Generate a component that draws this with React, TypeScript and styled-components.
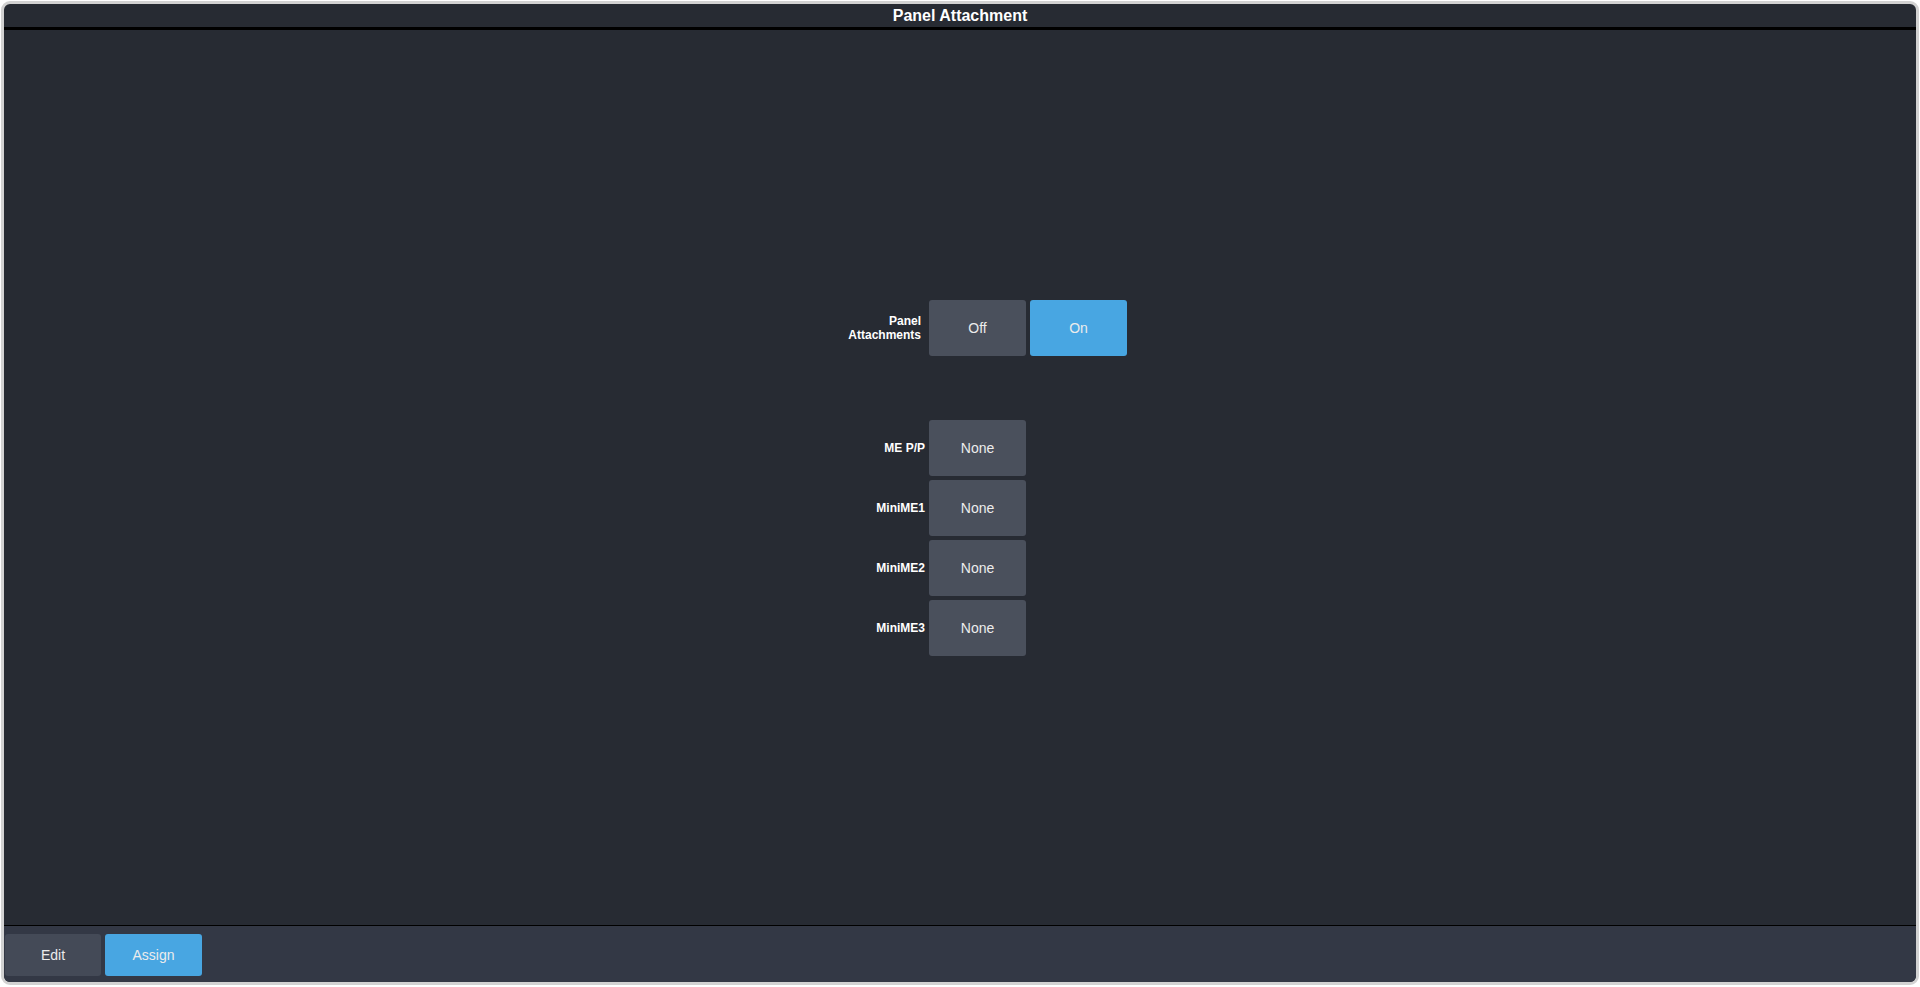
import React from 'react'
import styled, { createGlobalStyle } from 'styled-components'

const GlobalStyle = createGlobalStyle`
  html, body {
    margin: 0;
    padding: 0;
    background: #ffffff;
    font-family: 'Liberation Sans', Arial, sans-serif;
  }
  * {
    box-sizing: border-box;
  }
`

const Page = styled.div`
  width: 1920px;
  height: 987px;
  padding: 1px 1px 2px 1px;
`

const Frame = styled.div`
  height: 100%;
  display: flex;
  flex-direction: column;
  border: 3px solid #d2d2d2;
  border-radius: 9px;
  overflow: hidden;
  background: #272b33;
`

const TitleBar = styled.div`
  height: 26px;
  flex: none;
  display: flex;
  align-items: center;
  justify-content: center;
  color: #ffffff;
  font-size: 16px;
  font-weight: bold;
  border-bottom: 3px solid #000000;
  padding-top: 1px;
`

const Content = styled.div`
  flex: 1;
  display: flex;
  align-items: center;
  justify-content: center;
`

const Grid = styled.div`
  display: grid;
  grid-template-columns: 132px 97px 97px;
  column-gap: 4px;
  row-gap: 4px;
  & > *:nth-child(3n + 1) {
    margin-right: 4px;
  }
`

const Label = styled.div`
  display: flex;
  align-items: center;
  justify-content: flex-end;
  text-align: right;
  color: #ffffff;
  font-size: 12px;
  font-weight: bold;
  line-height: 14px;
  padding-top: 1px;
`

const Spacer = styled.div<{ $h: number }>`
  grid-column: 1 / span 3;
  height: ${({ $h }) => $h}px;
`

const Button = styled.div<{ $active?: boolean; $w?: number; $h?: number }>`
  width: ${({ $w }) => $w ?? 97}px;
  height: ${({ $h }) => $h ?? 56}px;
  display: flex;
  align-items: center;
  justify-content: center;
  border-radius: 3px;
  background: ${({ $active }) => ($active ? '#48a6e2' : '#4a505c')};
  color: #ececec;
  font-size: 14px;
  cursor: pointer;
`

const BottomBar = styled.div`
  height: 57px;
  flex: none;
  display: flex;
  align-items: flex-start;
  gap: 4px;
  padding: 8px 1px 0;
  background: #333845;
  border-top: 1px solid #000000;
`

const BarButton = styled(Button)`
  background: ${({ $active }) => ($active ? '#48a6e2' : '#444a57')};
`

const attachments = ['ME P/P', 'MiniME1', 'MiniME2', 'MiniME3']

export default function App() {
  return (
    <>
      <GlobalStyle />
      <Page>
        <Frame>
          <TitleBar>Panel Attachment</TitleBar>
          <Content>
            <Grid>
              <Label>
                Panel
                <br />
                Attachments
              </Label>
              <Button>Off</Button>
              <Button $active>On</Button>
              <Spacer $h={56} />
              {attachments.map((name) => (
                <React.Fragment key={name}>
                  <Label>{name}</Label>
                  <Button>None</Button>
                  <div />
                </React.Fragment>
              ))}
            </Grid>
          </Content>
          <BottomBar>
            <BarButton $w={96} $h={42}>
              Edit
            </BarButton>
            <BarButton $active $w={97} $h={42}>
              Assign
            </BarButton>
          </BottomBar>
        </Frame>
      </Page>
    </>
  )
}
